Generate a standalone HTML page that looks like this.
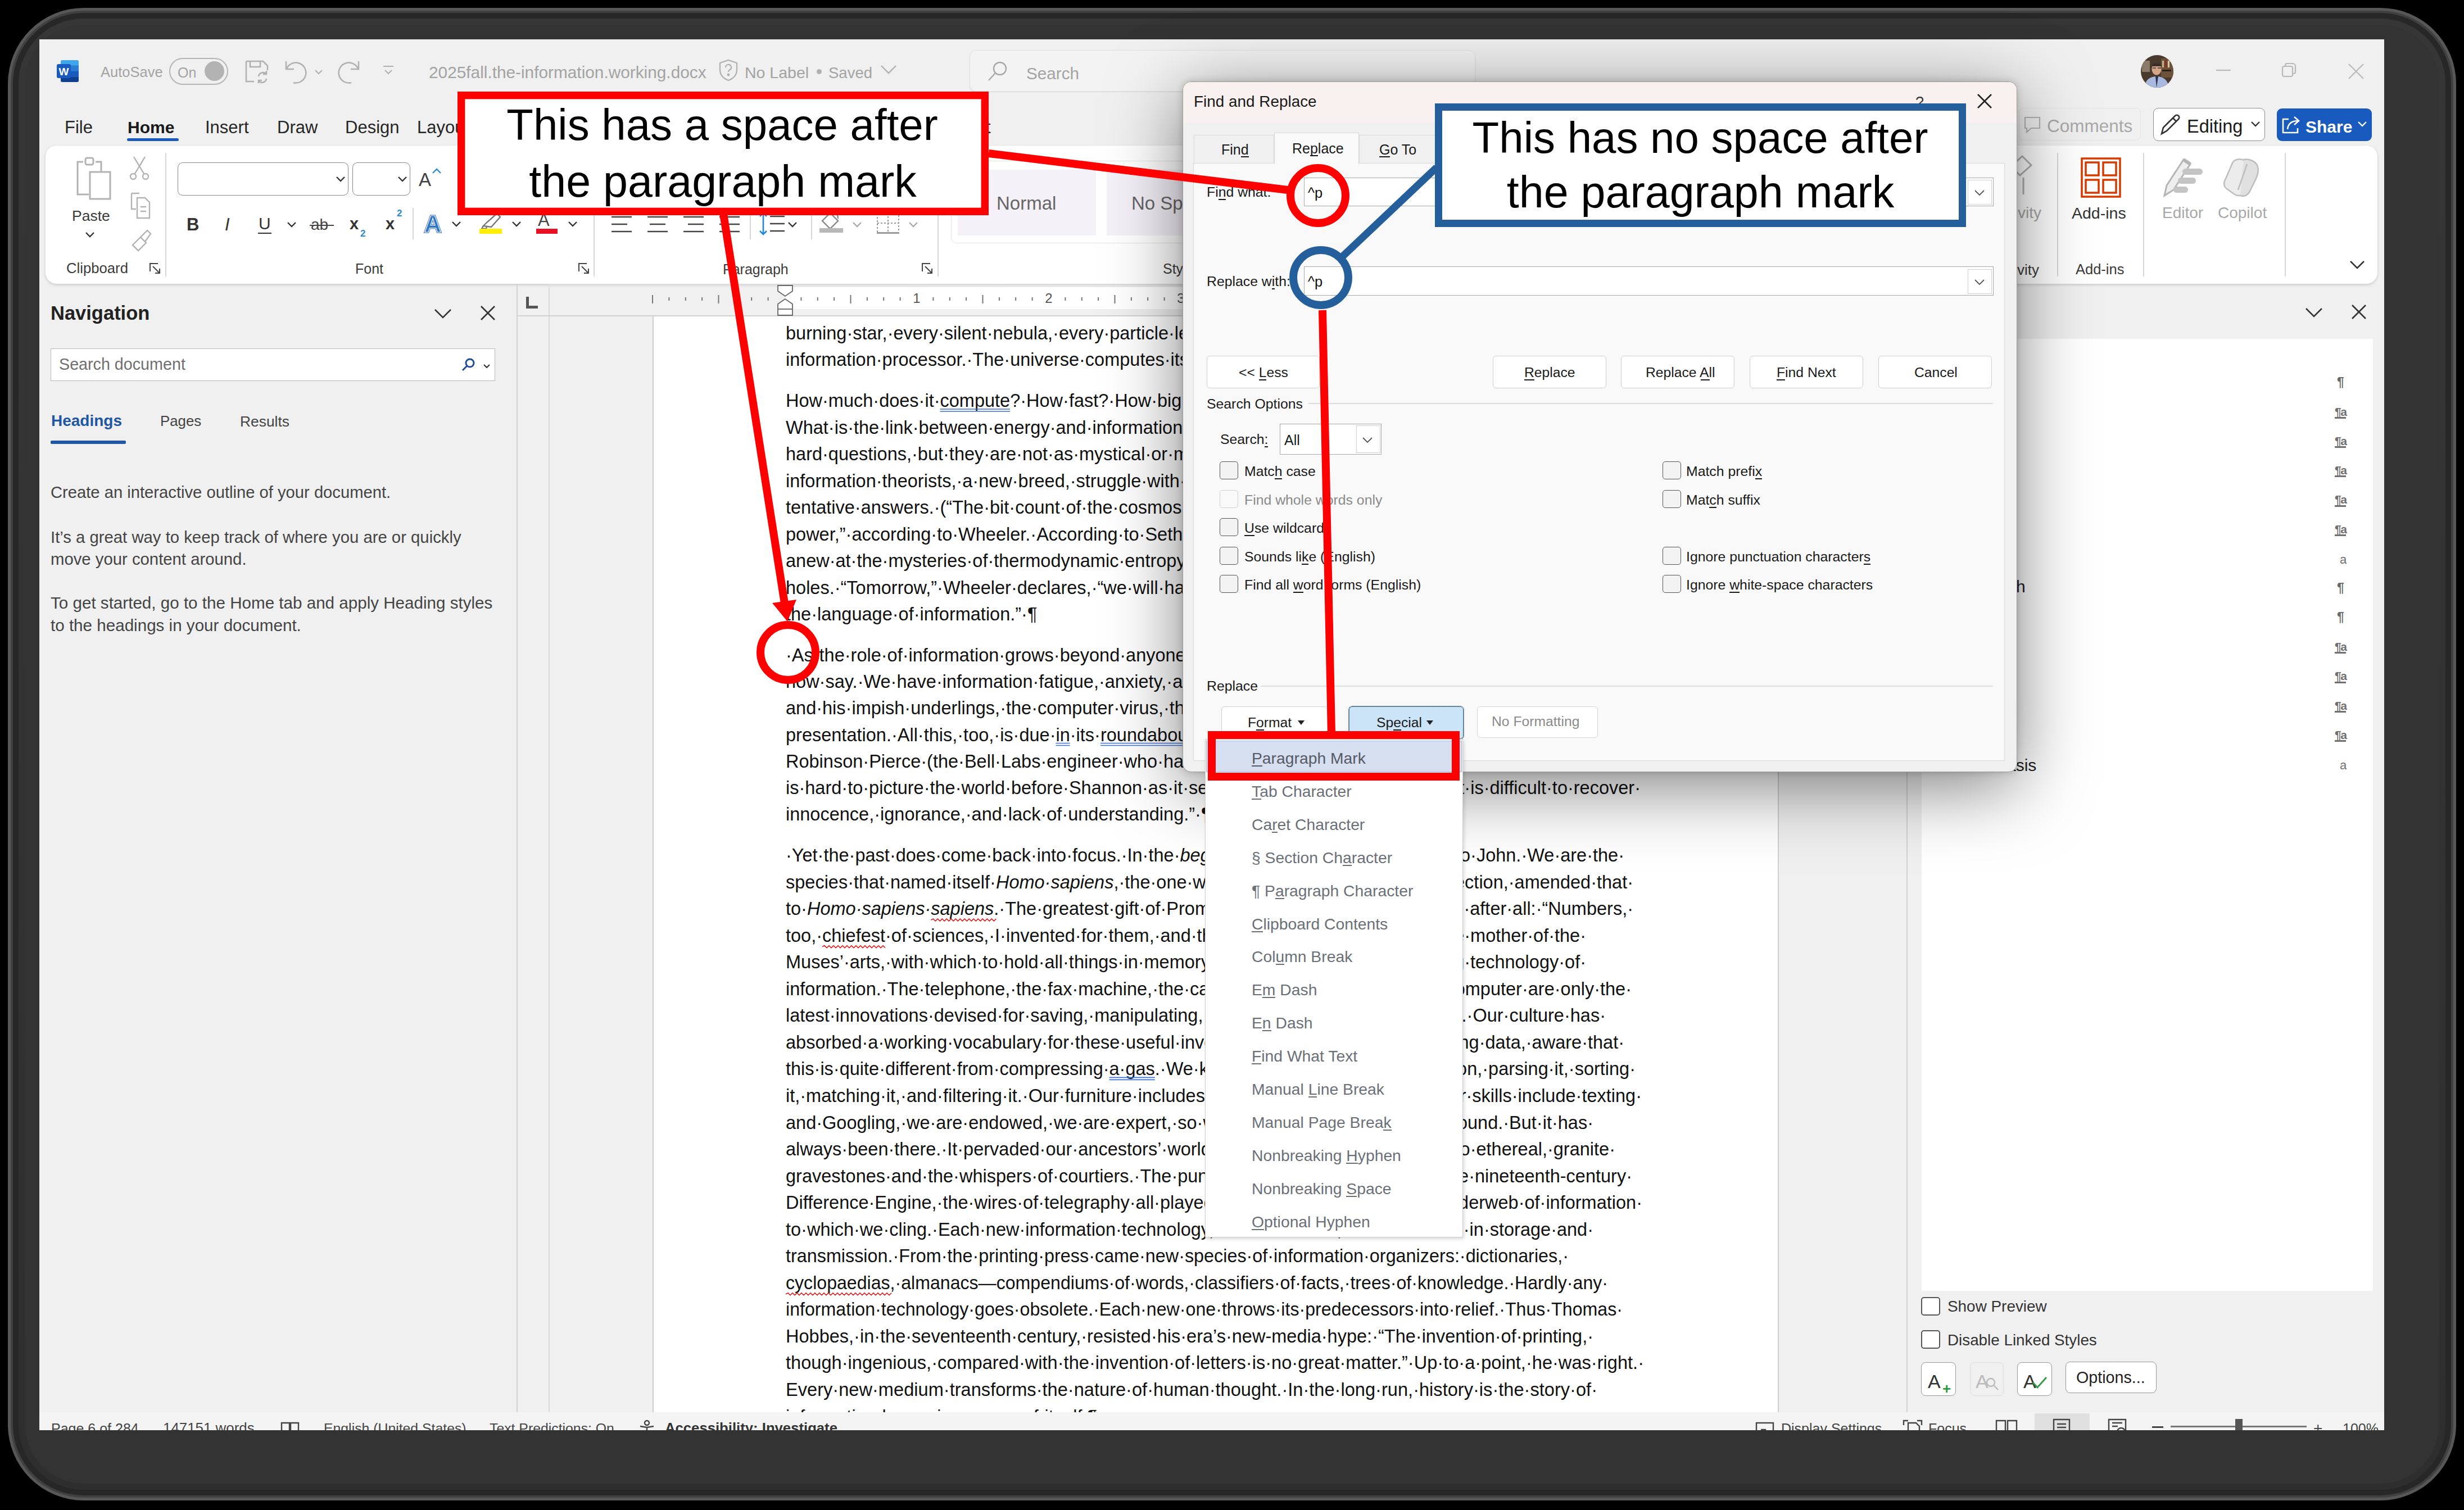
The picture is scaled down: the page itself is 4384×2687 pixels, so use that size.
<!DOCTYPE html>
<html><head><meta charset="utf-8">
<style>
*{margin:0;padding:0;box-sizing:border-box}
html,body{width:4384px;height:2687px;overflow:hidden;background:#000;font-family:"Liberation Sans",sans-serif}
.a{position:absolute}
.t{position:absolute;white-space:pre;line-height:1}
svg{position:absolute;overflow:visible}
</style></head><body>

<div class="a" style="left:14px;top:14px;width:4356px;height:2656px;border-radius:135px;background:#575757"></div>
<div class="a" style="left:19px;top:19px;width:4346px;height:2646px;border-radius:130px;background:#404040"></div>
<div class="a" style="left:23px;top:23px;width:4338px;height:2638px;border-radius:126px;background:#272727"></div>
<div class="a" style="left:33px;top:33px;width:4318px;height:2618px;border-radius:116px;background:linear-gradient(#363636,#2e2e2e)"></div>
<div class="a" style="left:44px;top:44px;width:4296px;height:2596px;border-radius:105px;background:#333"></div>
<div class="a" style="left:70px;top:70px;width:4172px;height:2475px;background:#f0f0f0;overflow:hidden"></div>
<svg style="left:100px;top:106px" width="42" height="42" viewBox="0 0 42 42">
<rect x="8" y="1" width="32" height="39" rx="3" fill="#41a5ee"/>
<rect x="8" y="10.5" width="32" height="10" fill="#2b7cd3"/>
<rect x="8" y="20.5" width="32" height="10" fill="#185abd"/>
<path d="M8 30.5h32v6.5a3 3 0 0 1-3 3H11a3 3 0 0 1-3-3z" fill="#103f91"/>
<rect x="1" y="8" width="25" height="25" rx="3" fill="#185abd"/>
<text x="13.5" y="27.5" font-size="19" font-weight="bold" fill="#fff" text-anchor="middle" font-family="Liberation Sans">W</text>
</svg>
<div class="t" style="left:179.0px;top:116.4px;font-size:25.5px;color:#a3a3a3;">AutoSave</div>
<div class="a" style="left:301px;top:103px;width:105px;height:48px;border:2px solid #b5b5b5;border-radius:24px"></div>
<div class="t" style="left:316.0px;top:116.8px;font-size:25px;color:#a3a3a3;">On</div>
<div class="a" style="left:364px;top:109px;width:35px;height:35px;border-radius:50%;background:#b3b3b3"></div>
<svg style="left:435px;top:106px" width="44" height="44" viewBox="0 0 44 44" fill="none" stroke="#b0b0b0" stroke-width="2.5">
<path d="M3 3h30l8 8v8M3 3v36h14M10 3v10h18V3"/><path d="M25 30a8 8 0 0 1 14-4M39 34a8 8 0 0 1-14 4M39 20v6h-6M25 42v-5h6"/></svg>
<svg style="left:505px;top:105px" width="75" height="44" viewBox="0 0 75 44" fill="none" stroke="#b0b0b0" stroke-width="2.5">
<path d="M4 4v14h14M5 17a18 18 0 1 1 12 25"/><path d="M56 20l6 6 6-6" stroke-width="2"/></svg>
<svg style="left:598px;top:105px" width="44" height="44" viewBox="0 0 44 44" fill="none" stroke="#b0b0b0" stroke-width="2.5">
<path d="M40 4v14H26M39 17a18 18 0 1 0-12 25"/></svg>
<svg style="left:677px;top:112px" width="28" height="28" viewBox="0 0 28 28" fill="none" stroke="#b0b0b0" stroke-width="2.2">
<path d="M5 6h18M8 13l6 6 6-6"/></svg>
<div class="t" style="left:763.0px;top:113.8px;font-size:29.8px;color:#a3a3a3;">2025fall.the-information.working.docx</div>
<svg style="left:1278px;top:105px" width="36" height="40" viewBox="0 0 36 40" fill="none" stroke="#b0b0b0" stroke-width="2.2">
<path d="M18 2l15 5v12c0 10-7 16-15 19C10 35 3 29 3 19V7z"/><path d="M13 15a5 5 0 1 1 7 4.5c-1.5.8-2 1.8-2 3.5"/><circle cx="18" cy="28" r="1.3" fill="#b0b0b0"/></svg>
<div class="t" style="left:1325.0px;top:114.9px;font-size:28.5px;color:#a3a3a3;">No Label</div>
<div class="a" style="left:1453px;top:123px;width:9px;height:9px;border-radius:50%;background:#b0b0b0"></div>
<div class="t" style="left:1474.0px;top:115.7px;font-size:27.5px;color:#a3a3a3;">Saved</div>
<svg style="left:1565px;top:112px" width="32" height="24" viewBox="0 0 32 24" fill="none" stroke="#b0b0b0" stroke-width="2.4">
<path d="M3 5l13 13 13-13"/></svg>
<div class="a" style="left:1725px;top:89px;width:900px;height:74px;border-radius:12px;background:#f3f3f3;border:1.5px solid #e1e1e1;box-shadow:0 1px 2px rgba(0,0,0,0.08)"></div>
<svg style="left:1755px;top:107px" width="40" height="40" viewBox="0 0 40 40" fill="none" stroke="#a8a8a8" stroke-width="2.4">
<circle cx="24" cy="15" r="11"/><path d="M16 23L4 36"/></svg>
<div class="t" style="left:1826.0px;top:115.9px;font-size:29.7px;color:#a3a3a3;">Search</div>
<svg style="left:3809px;top:98px" width="58" height="58" viewBox="0 0 58 58">
<defs><clipPath id="pc"><circle cx="29" cy="29" r="29"/></clipPath></defs>
<g clip-path="url(#pc)"><rect width="58" height="58" fill="#4a3a2e"/>
<rect x="36" y="6" width="22" height="34" fill="#6b5238"/><rect x="38" y="10" width="3" height="12" fill="#c9b48a"/><rect x="43" y="8" width="3" height="14" fill="#8c2f2a"/><rect x="48" y="10" width="3" height="12" fill="#d8c8a0"/><rect x="38" y="26" width="16" height="3" fill="#2a2018"/>
<rect x="2" y="10" width="14" height="20" fill="#8a7a68"/>
<ellipse cx="28" cy="25" rx="8.5" ry="10.5" fill="#d6a488"/>
<path d="M19 20c1-7 17-8 18 0" fill="#3a2e2a"/><path d="M21 23h6M30 23h6" stroke="#333" stroke-width="1.5"/>
<path d="M6 58c2-14 10-20 22-20s20 6 22 20z" fill="#a8b8df"/>
<path d="M26 38l2 20 3-20z" fill="#2b3550"/></g></svg>
<svg style="left:3930px;top:100px" width="290" height="54" viewBox="0 0 290 54" fill="none" stroke="#b9b9b9" stroke-width="2.2">
<path d="M13 25h26"/><rect x="131" y="18" width="18" height="18" rx="3"/><path d="M136 18v-2a3 3 0 0 1 3-3h10a5 5 0 0 1 5 5v10a3 3 0 0 1-3 3h-2"/>
<path d="M249 14l26 26M275 14l-26 26"/></svg>
<div class="t" style="left:115.0px;top:210.8px;font-size:31px;color:#262626;">File</div>
<div class="t" style="left:227.0px;top:211.6px;font-size:30px;color:#1a1a1a;font-weight:bold;">Home</div>
<div class="a" style="left:226px;top:246px;width:92px;height:5px;background:#185abd;border-radius:3px"></div>
<div class="t" style="left:365.0px;top:210.8px;font-size:31px;color:#262626;">Insert</div>
<div class="t" style="left:493.0px;top:210.8px;font-size:31px;color:#262626;">Draw</div>
<div class="t" style="left:614.0px;top:210.8px;font-size:31px;color:#262626;">Design</div>
<div class="t" style="left:742.0px;top:210.8px;font-size:31px;color:#262626;">Layout</div>
<div class="t" style="left:1754.0px;top:210.8px;font-size:31px;color:#262626;">t</div>
<div class="a" style="left:3592px;top:192px;width:217px;height:58px;border:1.5px solid #e3e3e3;border-radius:8px"></div>
<svg style="left:3600px;top:206px" width="32" height="32" viewBox="0 0 32 32" fill="none" stroke="#b3b3b3" stroke-width="2.2">
<path d="M3 3h26v19H14l-8 7v-7H3z"/></svg>
<div class="t" style="left:3642.0px;top:209.3px;font-size:31.5px;color:#a8a8a8;">Comments</div>
<div class="a" style="left:3831px;top:192px;width:199px;height:59px;background:#fff;border:1.5px solid #8f8f8f;border-radius:9px"></div>
<svg style="left:3841px;top:201px" width="40" height="42" viewBox="0 0 40 42" fill="none" stroke="#333" stroke-width="2.6">
<path d="M5 37l3-11L29 5a4 4 0 0 1 6 6L14 32z"/><path d="M25 9l6 6"/></svg>
<div class="t" style="left:3891.0px;top:208.5px;font-size:32.5px;color:#1a1a1a;">Editing</div>
<svg style="left:4003px;top:214px" width="20" height="14" viewBox="0 0 20 14" fill="none" stroke="#333" stroke-width="2.4"><path d="M3 3l7 7 7-7"/></svg>
<div class="a" style="left:4051px;top:193px;width:169px;height:58px;background:#185abd;border-radius:9px"></div>
<svg style="left:4058px;top:204px" width="38" height="36" viewBox="0 0 38 36" fill="none" stroke="#fff" stroke-width="2.6">
<path d="M14 8H4v24h26v-8"/><path d="M12 26c1-10 8-15 19-15M24 4l8 7-8 7"/></svg>
<div class="t" style="left:4102.0px;top:210.6px;font-size:30px;color:#fff;font-weight:bold;">Share</div>
<svg style="left:4193px;top:214px" width="20" height="14" viewBox="0 0 20 14" fill="none" stroke="#fff" stroke-width="2.4"><path d="M3 3l7 7 7-7"/></svg>
<div class="a" style="left:81px;top:259px;width:4149px;height:246px;background:#fff;border-radius:20px;box-shadow:0 2px 5px rgba(0,0,0,0.16)"></div>
<svg style="left:126px;top:276px" width="80" height="82" viewBox="0 0 80 82" fill="none" stroke="#b3b3b3" stroke-width="3">
<path d="M22 12h-10v58h20"/><path d="M44 12h10v18"/><rect x="26" y="5" width="14" height="12" rx="3"/><rect x="34" y="30" width="36" height="48" fill="#fff"/></svg>
<div class="t" style="left:128.0px;top:370.6px;font-size:26.5px;color:#3b3b3b;">Paste</div>
<svg style="left:150px;top:411px" width="20" height="14" viewBox="0 0 20 14" fill="none" stroke="#333" stroke-width="2.4"><path d="M3 3l7 7 7-7"/></svg>
<svg style="left:228px;top:276px" width="40" height="180" viewBox="0 0 40 180" fill="none" stroke="#b3b3b3" stroke-width="2.4">
<path d="M10 3l18 30M30 3L12 33"/><circle cx="9" cy="38" r="5"/><circle cx="31" cy="38" r="5"/>
<path d="M6 68h14l0 0M6 68v28h8"/><path d="M16 76h14l8 8v28H16z"/><path d="M22 92h10M22 100h10"/>
<path d="M8 160l14-14 10 10-14 14zM22 146l12-12 6 6-10 14"/><path d="M8 160c4 4 8 8 10 10"/></svg>
<div class="t" style="left:118.0px;top:465.2px;font-size:25.7px;color:#3b3b3b;">Clipboard</div>
<svg style="left:265px;top:467px" width="22" height="22" viewBox="0 0 22 22" fill="none" stroke="#444" stroke-width="2">
<path d="M2 16V2h14"/><path d="M7 7l12 12M19 11v8h-8"/></svg>
<div class="a" style="left:294px;top:272px;width:2px;height:220px;background:#d6d6d6"></div>
<div class="a" style="left:316px;top:289px;width:304px;height:59px;border:1.5px solid #8a8a8a;border-radius:9px;background:#fff"></div>
<div class="a" style="left:627px;top:289px;width:103px;height:59px;border:1.5px solid #8a8a8a;border-radius:9px;background:#fff"></div>
<svg style="left:595.0px;top:311.0px" width="22" height="14.0" viewBox="-3 -3 22 14.0" fill="none" stroke="#333" stroke-width="2.4"><path d="M1 1l7.0 7.0 7.0 -7.0"/></svg>
<svg style="left:705.0px;top:311.0px" width="22" height="14.0" viewBox="-3 -3 22 14.0" fill="none" stroke="#333" stroke-width="2.4"><path d="M1 1l7.0 7.0 7.0 -7.0"/></svg>
<div class="t" style="left:745.0px;top:303.1px;font-size:33px;color:#424242;">A</div>
<svg style="left:768px;top:298px" width="18" height="12" viewBox="0 0 18 12" fill="none" stroke="#2b88d8" stroke-width="2.4"><path d="M2 10l7-7 7 7"/></svg>
<div class="t" style="left:332.0px;top:383.8px;font-size:31px;color:#333;font-weight:bold;">B</div>
<div class="t" style="left:400.0px;top:383.8px;font-size:31px;color:#333;font-style:italic;font-family:"Liberation Serif"">I</div>
<div class="t" style="left:460.0px;top:382.6px;font-size:30px;color:#333;">U</div>
<div class="a" style="left:459px;top:414px;width:24px;height:2px;background:#333"></div>
<svg style="left:508.0px;top:392.0px" width="22" height="14.0" viewBox="-3 -3 22 14.0" fill="none" stroke="#333" stroke-width="2.4"><path d="M1 1l7.0 7.0 7.0 -7.0"/></svg>
<div class="t" style="left:553.0px;top:386.3px;font-size:28px;color:#444;">ab</div>
<div class="a" style="left:551px;top:400px;width:43px;height:2px;background:#444"></div>
<div class="t" style="left:622.0px;top:383.5px;font-size:29px;color:#333;font-weight:bold;">x</div>
<div class="t" style="left:641.0px;top:406.6px;font-size:17px;color:#2b88d8;font-weight:bold;">2</div>
<div class="t" style="left:686.0px;top:383.5px;font-size:29px;color:#333;font-weight:bold;">x</div>
<div class="t" style="left:706.0px;top:370.6px;font-size:17px;color:#2b88d8;font-weight:bold;">2</div>
<div class="a" style="left:734px;top:370px;width:2px;height:56px;background:#d6d6d6"></div>
<svg style="left:745px;top:370px" width="50" height="50" viewBox="0 0 50 50"><text x="25" y="43" font-size="42" font-weight="bold" text-anchor="middle" font-family="Liberation Sans" fill="#2b7cd3" stroke="#1b5fb8" stroke-width="3">A</text><text x="25" y="43" font-size="42" font-weight="bold" text-anchor="middle" font-family="Liberation Sans" fill="none" stroke="#fff" stroke-width="1.2">A</text></svg>
<svg style="left:801.0px;top:391.0px" width="22" height="14.0" viewBox="-3 -3 22 14.0" fill="none" stroke="#333" stroke-width="2.4"><path d="M1 1l7.0 7.0 7.0 -7.0"/></svg>
<svg style="left:852px;top:374px" width="44" height="44" viewBox="0 0 44 44" fill="none" stroke="#777" stroke-width="2.4">
<path d="M8 28l6-6 18-16 6 6-16 18z"/><path d="M8 28l-3 5h8l1-4"/></svg>
<div class="a" style="left:853px;top:407px;width:40px;height:9px;background:#ffee00"></div>
<svg style="left:908.0px;top:391.0px" width="22" height="14.0" viewBox="-3 -3 22 14.0" fill="none" stroke="#333" stroke-width="2.4"><path d="M1 1l7.0 7.0 7.0 -7.0"/></svg>
<div class="t" style="left:957.0px;top:375.8px;font-size:31px;color:#444;">A</div>
<div class="a" style="left:954px;top:407px;width:38px;height:9px;background:#e81123"></div>
<svg style="left:1008.0px;top:391.0px" width="22" height="14.0" viewBox="-3 -3 22 14.0" fill="none" stroke="#333" stroke-width="2.4"><path d="M1 1l7.0 7.0 7.0 -7.0"/></svg>
<div class="t" style="left:632.0px;top:465.8px;font-size:25px;color:#3b3b3b;">Font</div>
<svg style="left:1028px;top:467px" width="22" height="22" viewBox="0 0 22 22" fill="none" stroke="#444" stroke-width="2">
<path d="M2 16V2h14"/><path d="M7 7l12 12M19 11v8h-8"/></svg>
<div class="a" style="left:1056px;top:272px;width:2px;height:220px;background:#d6d6d6"></div>
<svg style="left:1085px;top:380px" width="240" height="38" viewBox="0 0 240 38" fill="none" stroke="#444" stroke-width="2.6">
<path d="M3 6h36M3 19h28M3 32h36"/><path d="M67 6h36M71 19h28M67 32h36"/><path d="M131 6h36M139 19h28M131 32h36"/><path d="M195 6h36M195 19h36M195 32h36"/></svg>
<div class="a" style="left:1334px;top:370px;width:2px;height:56px;background:#d6d6d6"></div>
<svg style="left:1350px;top:375px" width="50" height="46" viewBox="0 0 50 46" fill="none" stroke-width="2.6">
<path d="M8 4v38M2 10l6-6 6 6M2 36l6 6 6-6" stroke="#1e88e5"/><path d="M20 10h26M20 23h26M20 36h26" stroke="#444"/></svg>
<svg style="left:1399.0px;top:392.0px" width="22" height="14.0" viewBox="-3 -3 22 14.0" fill="none" stroke="#333" stroke-width="2.4"><path d="M1 1l7.0 7.0 7.0 -7.0"/></svg>
<div class="a" style="left:1443px;top:370px;width:2px;height:56px;background:#d6d6d6"></div>
<svg style="left:1455px;top:373px" width="50" height="46" viewBox="0 0 50 46" fill="none" stroke="#888" stroke-width="2.4">
<path d="M8 20l14-14 14 14-14 14z"/><path d="M22 6c6-4 14 0 14 10"/></svg>
<div class="a" style="left:1458px;top:406px;width:42px;height:8px;background:#b8b8b8"></div>
<svg style="left:1514.0px;top:392.0px" width="22" height="14.0" viewBox="-3 -3 22 14.0" fill="none" stroke="#aaa" stroke-width="2.4"><path d="M1 1l7.0 7.0 7.0 -7.0"/></svg>
<svg style="left:1558px;top:376px" width="46" height="42" viewBox="0 0 46 42" fill="none" stroke="#9a9a9a" stroke-width="2" stroke-dasharray="3 3">
<path d="M3 3h38v36H3zM22 3v36M3 21h38"/></svg>
<div class="a" style="left:1560px;top:413px;width:40px;height:3px;background:#9a9a9a"></div>
<svg style="left:1614.0px;top:392.0px" width="22" height="14.0" viewBox="-3 -3 22 14.0" fill="none" stroke="#aaa" stroke-width="2.4"><path d="M1 1l7.0 7.0 7.0 -7.0"/></svg>
<div class="t" style="left:1286.0px;top:466.8px;font-size:25px;color:#3b3b3b;">Paragraph</div>
<svg style="left:1639px;top:467px" width="22" height="22" viewBox="0 0 22 22" fill="none" stroke="#444" stroke-width="2">
<path d="M2 16V2h14"/><path d="M7 7l12 12M19 11v8h-8"/></svg>
<div class="a" style="left:1668px;top:272px;width:2px;height:220px;background:#d6d6d6"></div>
<div class="a" style="left:1692px;top:286px;width:700px;height:147px;border:1.5px solid #e3e3e3;border-radius:10px"></div>
<div class="a" style="left:1704px;top:302px;width:246px;height:117px;background:#f4f1f8"></div>
<div class="a" style="left:1969px;top:302px;width:246px;height:117px;background:#f4f1f8"></div>
<div class="t" style="left:1773.0px;top:345.1px;font-size:33px;color:#666;">Normal</div>
<div class="t" style="left:2013.0px;top:345.1px;font-size:33px;color:#666;">No Spacing</div>
<div class="t" style="left:2069.0px;top:465.8px;font-size:25px;color:#3b3b3b;">Styles</div>
<div class="t" style="right:752.0px;top:365.3px;font-size:28px;color:#a8a8a8;">Sensitivity</div>
<div class="t" style="right:756.0px;top:467.0px;font-size:26px;color:#3b3b3b;">Sensitivity</div>
<svg style="left:3588px;top:276px" width="40" height="80" viewBox="0 0 40 80" fill="none" stroke="#b3b3b3" stroke-width="3"><path d="M-10 20L10 2l16 16-20 18z"/><path d="M-2 40v30M12 40v30"/></svg>
<div class="a" style="left:3660px;top:272px;width:2px;height:220px;background:#d6d6d6"></div>
<svg style="left:3702px;top:280px" width="72" height="72" viewBox="0 0 72 72" fill="none" stroke="#d83b01" stroke-width="3.5">
<rect x="2" y="2" width="68" height="68"/><rect x="9" y="9" width="23" height="23"/><rect x="40" y="9" width="23" height="23"/><rect x="9" y="40" width="23" height="23"/><rect x="40" y="40" width="23" height="23"/></svg>
<div class="t" style="left:3686.0px;top:364.9px;font-size:28.5px;color:#333;">Add-ins</div>
<div class="t" style="left:3693.0px;top:467.4px;font-size:25.5px;color:#3b3b3b;">Add-ins</div>
<div class="a" style="left:3813px;top:272px;width:2px;height:220px;background:#d6d6d6"></div>
<svg style="left:3845px;top:278px" width="80" height="75" viewBox="0 0 80 75" stroke="#b5b5b5" stroke-width="3">
<path d="M6 70l4-18L40 6l12 8-30 46z" fill="#eeeeee"/><path d="M40 6l12 8" stroke-width="6"/>
<rect x="38" y="22" width="36" height="11" rx="5.5" fill="#c4c4c4" stroke="none"/><rect x="30" y="38" width="32" height="11" rx="5.5" fill="#c4c4c4" stroke="none"/><rect x="22" y="54" width="26" height="11" rx="5.5" fill="#c4c4c4" stroke="none"/></svg>
<div class="t" style="left:3847.0px;top:365.3px;font-size:28px;color:#a8a8a8;">Editor</div>
<svg style="left:3952px;top:278px" width="80" height="75" viewBox="0 0 80 75" stroke="#bdbdbd" stroke-width="2.5">
<path d="M20 12c4-8 16-8 22-4l14 6c8 4 6 14 2 20L44 62c-4 8-14 10-20 6L10 58c-6-4-6-12-2-18z" fill="#ececec"/>
<path d="M40 6c8-2 20 2 24 10s0 20-4 28L50 64c-4 6-10 8-16 6" fill="#e0e0e0"/><path d="M46 14L30 60" fill="none"/></svg>
<div class="t" style="left:3946.0px;top:365.3px;font-size:28px;color:#a8a8a8;">Copilot</div>
<div class="a" style="left:4065px;top:272px;width:2px;height:220px;background:#d6d6d6"></div>
<svg style="left:4178.0px;top:460.5px" width="32" height="19.0" viewBox="-3 -3 32 19.0" fill="none" stroke="#333" stroke-width="2.6"><path d="M1 1l12.0 12.0 12.0 -12.0"/></svg>
<div class="t" style="left:90.0px;top:539.8px;font-size:34.5px;color:#222;font-weight:bold;">Navigation</div>
<svg style="left:770.0px;top:546.5px" width="36" height="21.0" viewBox="-3 -3 36 21.0" fill="none" stroke="#333" stroke-width="2.6"><path d="M1 1l14.0 14.0 14.0 -14.0"/></svg>
<svg style="left:853px;top:542px" width="30" height="30" viewBox="0 0 30 30" fill="none" stroke="#333" stroke-width="2.6"><path d="M3 3l24 24M27 3L3 27"/></svg>
<div class="a" style="left:90px;top:620px;width:791px;height:58px;background:#fff;border:1.5px solid #b9b9b9"></div>
<div class="t" style="left:105.0px;top:633.7px;font-size:28.7px;color:#6f6f6f;">Search document</div>
<svg style="left:820px;top:636px" width="26" height="26" viewBox="0 0 26 26" fill="none" stroke="#1f4e9a" stroke-width="3"><circle cx="16" cy="10" r="7"/><path d="M11 15L3 23"/></svg>
<svg style="left:857.0px;top:645.0px" width="18" height="12.0" viewBox="-3 -3 18 12.0" fill="none" stroke="#333" stroke-width="2.2"><path d="M1 1l5.0 5.0 5.0 -5.0"/></svg>
<div class="t" style="left:91.0px;top:735.3px;font-size:28px;color:#2156a5;font-weight:bold;">Headings</div>
<div class="a" style="left:90px;top:784px;width:134px;height:6px;background:#2156a5;border-radius:2px"></div>
<div class="t" style="left:285.0px;top:737.2px;font-size:25.8px;color:#444;">Pages</div>
<div class="t" style="left:427.0px;top:736.7px;font-size:26.4px;color:#444;">Results</div>
<div class="t" style="left:90.0px;top:862.3px;font-size:29.2px;color:#444;">Create an interactive outline of your document.</div>
<div class="t" style="left:90.0px;top:941.2px;font-size:29.3px;color:#444;">It’s a great way to keep track of where you are or quickly</div>
<div class="t" style="left:90.0px;top:980.2px;font-size:29.3px;color:#444;">move your content around.</div>
<div class="t" style="left:90.0px;top:1057.9px;font-size:29.6px;color:#444;">To get started, go to the Home tab and apply Heading styles</div>
<div class="t" style="left:90.0px;top:1097.9px;font-size:29.6px;color:#444;">to the headings in your document.</div>
<div class="a" style="left:919px;top:505px;width:2px;height:2008px;background:#d2d2d2"></div>
<div class="a" style="left:976px;top:505px;width:2px;height:2008px;background:#d9d9d9"></div>
<div class="a" style="left:920px;top:561px;width:2472px;height:2px;background:#d2d2d2"></div>
<svg style="left:932px;top:524px" width="30" height="30" viewBox="0 0 30 30" fill="#555"><path d="M4 4h5v16h16v5H4z"/></svg>
<div class="a" style="left:977px;top:505px;width:2415px;height:7px;background:linear-gradient(#d8d8d8,#f0f0f0)"></div>
<div class="a" style="left:1397px;top:511px;width:1531px;height:39px;background:#fff"></div>
<svg style="left:0;top:0" width="4384" height="600"><rect x="1160.0" y="525" width="2" height="15" fill="#777"/><rect x="1189.4" y="529" width="2" height="6" fill="#777"/><rect x="1218.8" y="529" width="2" height="6" fill="#777"/><rect x="1248.1" y="529" width="2" height="6" fill="#777"/><rect x="1277.5" y="525" width="2" height="15" fill="#777"/><rect x="1306.9" y="529" width="2" height="6" fill="#777"/><rect x="1336.2" y="529" width="2" height="6" fill="#777"/><rect x="1365.6" y="529" width="2" height="6" fill="#777"/><rect x="1424.4" y="529" width="2" height="6" fill="#777"/><rect x="1453.8" y="529" width="2" height="6" fill="#777"/><rect x="1483.1" y="529" width="2" height="6" fill="#777"/><rect x="1512.5" y="525" width="2" height="15" fill="#777"/><rect x="1541.9" y="529" width="2" height="6" fill="#777"/><rect x="1571.2" y="529" width="2" height="6" fill="#777"/><rect x="1600.6" y="529" width="2" height="6" fill="#777"/><text x="1631.0" y="539" font-size="24" text-anchor="middle" fill="#555" font-family="Liberation Sans">1</text><rect x="1659.4" y="529" width="2" height="6" fill="#777"/><rect x="1688.8" y="529" width="2" height="6" fill="#777"/><rect x="1718.1" y="529" width="2" height="6" fill="#777"/><rect x="1747.5" y="525" width="2" height="15" fill="#777"/><rect x="1776.9" y="529" width="2" height="6" fill="#777"/><rect x="1806.2" y="529" width="2" height="6" fill="#777"/><rect x="1835.6" y="529" width="2" height="6" fill="#777"/><text x="1866.0" y="539" font-size="24" text-anchor="middle" fill="#555" font-family="Liberation Sans">2</text><rect x="1894.4" y="529" width="2" height="6" fill="#777"/><rect x="1923.8" y="529" width="2" height="6" fill="#777"/><rect x="1953.1" y="529" width="2" height="6" fill="#777"/><rect x="1982.5" y="525" width="2" height="15" fill="#777"/><rect x="2011.9" y="529" width="2" height="6" fill="#777"/><rect x="2041.2" y="529" width="2" height="6" fill="#777"/><rect x="2070.6" y="529" width="2" height="6" fill="#777"/><text x="2101.0" y="539" font-size="24" text-anchor="middle" fill="#555" font-family="Liberation Sans">3</text><rect x="2129.4" y="529" width="2" height="6" fill="#777"/><rect x="2158.8" y="529" width="2" height="6" fill="#777"/><rect x="2188.1" y="529" width="2" height="6" fill="#777"/><rect x="2217.5" y="525" width="2" height="15" fill="#777"/><rect x="2246.9" y="529" width="2" height="6" fill="#777"/><rect x="2276.2" y="529" width="2" height="6" fill="#777"/><rect x="2305.6" y="529" width="2" height="6" fill="#777"/><text x="2336.0" y="539" font-size="24" text-anchor="middle" fill="#555" font-family="Liberation Sans">4</text><rect x="2364.4" y="529" width="2" height="6" fill="#777"/><rect x="2393.8" y="529" width="2" height="6" fill="#777"/><rect x="2423.1" y="529" width="2" height="6" fill="#777"/><rect x="2452.5" y="525" width="2" height="15" fill="#777"/><rect x="2481.9" y="529" width="2" height="6" fill="#777"/><rect x="2511.2" y="529" width="2" height="6" fill="#777"/><rect x="2540.6" y="529" width="2" height="6" fill="#777"/><text x="2571.0" y="539" font-size="24" text-anchor="middle" fill="#555" font-family="Liberation Sans">5</text><rect x="2599.4" y="529" width="2" height="6" fill="#777"/><rect x="2628.8" y="529" width="2" height="6" fill="#777"/><rect x="2658.1" y="529" width="2" height="6" fill="#777"/><rect x="2687.5" y="525" width="2" height="15" fill="#777"/><rect x="2716.9" y="529" width="2" height="6" fill="#777"/><rect x="2746.2" y="529" width="2" height="6" fill="#777"/><rect x="2775.6" y="529" width="2" height="6" fill="#777"/><text x="2806.0" y="539" font-size="24" text-anchor="middle" fill="#555" font-family="Liberation Sans">6</text><rect x="2834.4" y="529" width="2" height="6" fill="#777"/><rect x="2863.8" y="529" width="2" height="6" fill="#777"/><rect x="2893.1" y="529" width="2" height="6" fill="#777"/><rect x="2922.5" y="525" width="2" height="15" fill="#777"/><rect x="2951.9" y="529" width="2" height="6" fill="#777"/><rect x="2981.2" y="529" width="2" height="6" fill="#777"/><rect x="3010.6" y="529" width="2" height="6" fill="#777"/><text x="3041.0" y="539" font-size="24" text-anchor="middle" fill="#555" font-family="Liberation Sans">7</text><rect x="3069.4" y="529" width="2" height="6" fill="#777"/><rect x="3098.8" y="529" width="2" height="6" fill="#777"/><rect x="3128.1" y="529" width="2" height="6" fill="#777"/>
<path d="M1384 508h26v10l-13 9-13-9z" fill="#fff" stroke="#666" stroke-width="1.8"/>
<path d="M1384 561v-20l13-9 13 9v20z" fill="#fff" stroke="#666" stroke-width="1.8"/><path d="M1384 550h26" stroke="#666" stroke-width="1.8"/>
</svg>
<div class="a" style="left:1163px;top:563px;width:2000px;height:1950px;background:#fff"></div>
<div class="a" style="left:1161px;top:563px;width:2px;height:1950px;background:#cfcfcf"></div>
<div class="a" style="left:3163px;top:563px;width:2px;height:1950px;background:#cfcfcf"></div>
<div class="a" style="left:3392px;top:505px;width:2px;height:2008px;background:#d2d2d2"></div>
<svg style="left:4099.0px;top:544.5px" width="36" height="21.0" viewBox="-3 -3 36 21.0" fill="none" stroke="#333" stroke-width="2.6"><path d="M1 1l14.0 14.0 14.0 -14.0"/></svg>
<svg style="left:4182px;top:540px" width="30" height="30" viewBox="0 0 30 30" fill="none" stroke="#333" stroke-width="2.6"><path d="M3 3l24 24M27 3L3 27"/></svg>
<div class="a" style="left:3419px;top:603px;width:803px;height:1694px;background:#fff"></div>
<div class="t" style="left:4158.0px;top:668.5px;font-size:23px;color:#6a6a6a;font-weight:bold;">¶</div>
<div class="t" style="left:4154.0px;top:721.5px;font-size:21px;color:#707070;font-weight:bold;letter-spacing:-1.5px">¶a</div>
<div class="a" style="left:4154px;top:742px;width:20px;height:3px;background:#707070"></div>
<div class="t" style="left:4154.0px;top:773.8px;font-size:21px;color:#707070;font-weight:bold;letter-spacing:-1.5px">¶a</div>
<div class="a" style="left:4154px;top:794px;width:20px;height:3px;background:#707070"></div>
<div class="t" style="left:4154.0px;top:826.1px;font-size:21px;color:#707070;font-weight:bold;letter-spacing:-1.5px">¶a</div>
<div class="a" style="left:4154px;top:846px;width:20px;height:3px;background:#707070"></div>
<div class="t" style="left:4154.0px;top:878.4px;font-size:21px;color:#707070;font-weight:bold;letter-spacing:-1.5px">¶a</div>
<div class="a" style="left:4154px;top:899px;width:20px;height:3px;background:#707070"></div>
<div class="t" style="left:4154.0px;top:930.7px;font-size:21px;color:#707070;font-weight:bold;letter-spacing:-1.5px">¶a</div>
<div class="a" style="left:4154px;top:951px;width:20px;height:3px;background:#707070"></div>
<div class="t" style="left:4163.0px;top:985.2px;font-size:22px;color:#707070;">a</div>
<div class="t" style="left:4158.0px;top:1034.6px;font-size:23px;color:#6a6a6a;font-weight:bold;">¶</div>
<div class="t" style="left:4158.0px;top:1086.9px;font-size:23px;color:#6a6a6a;font-weight:bold;">¶</div>
<div class="t" style="left:4154.0px;top:1139.9px;font-size:21px;color:#707070;font-weight:bold;letter-spacing:-1.5px">¶a</div>
<div class="a" style="left:4154px;top:1160px;width:20px;height:3px;background:#707070"></div>
<div class="t" style="left:4154.0px;top:1192.2px;font-size:21px;color:#707070;font-weight:bold;letter-spacing:-1.5px">¶a</div>
<div class="a" style="left:4154px;top:1213px;width:20px;height:3px;background:#707070"></div>
<div class="t" style="left:4154.0px;top:1244.5px;font-size:21px;color:#707070;font-weight:bold;letter-spacing:-1.5px">¶a</div>
<div class="a" style="left:4154px;top:1265px;width:20px;height:3px;background:#707070"></div>
<div class="t" style="left:4154.0px;top:1296.8px;font-size:21px;color:#707070;font-weight:bold;letter-spacing:-1.5px">¶a</div>
<div class="a" style="left:4154px;top:1317px;width:20px;height:3px;background:#707070"></div>
<div class="t" style="left:4163.0px;top:1351.3px;font-size:22px;color:#707070;">a</div>
<div class="t" style="left:3587.0px;top:1028.6px;font-size:30px;color:#222;">h</div>
<div class="t" style="left:3570.0px;top:1346.6px;font-size:30px;color:#222;">asis</div>
<div class="a" style="left:3418px;top:2308px;width:34px;height:33px;border:2px solid #555;border-radius:5px;background:#fff"></div>
<div class="t" style="left:3465.0px;top:2311.4px;font-size:27.9px;color:#333;">Show Preview</div>
<div class="a" style="left:3418px;top:2367px;width:34px;height:33px;border:2px solid #555;border-radius:5px;background:#fff"></div>
<div class="t" style="left:3465.0px;top:2370.5px;font-size:27.8px;color:#333;">Disable Linked Styles</div>
<div class="a" style="left:3418px;top:2424px;width:62px;height:60px;border:1.5px solid #999;border-radius:8px;background:#fff"></div>
<div class="t" style="left:3430.0px;top:2441.2px;font-size:34px;color:#333;">A</div>
<div class="t" style="left:3456.0px;top:2458.0px;font-size:26px;color:#2e9a3e;font-weight:bold;">+</div>
<div class="a" style="left:3505px;top:2424px;width:60px;height:60px;border:1.5px solid #dedede;border-radius:8px"></div>
<div class="t" style="left:3515.0px;top:2441.2px;font-size:34px;color:#bbb;">A</div>
<svg style="left:3530px;top:2448px" width="28" height="28" viewBox="0 0 28 28" fill="none" stroke="#bbb" stroke-width="2.4"><circle cx="12" cy="12" r="7"/><path d="M17 17l8 8"/></svg>
<div class="a" style="left:3589px;top:2424px;width:62px;height:60px;border:1.5px solid #999;border-radius:8px;background:#fff"></div>
<div class="t" style="left:3600.0px;top:2441.2px;font-size:34px;color:#333;">A</div>
<svg style="left:3614px;top:2448px" width="30" height="26" viewBox="0 0 30 26" fill="none" stroke="#2e9a3e" stroke-width="2.8"><path d="M3 12l8 9L27 3"/></svg>
<div class="a" style="left:3675px;top:2423px;width:162px;height:56px;border:1.5px solid #999;border-radius:8px;background:#fff"></div>
<div class="t" style="left:3694.0px;top:2436.7px;font-size:28.7px;color:#222;">Options...</div>
<div class="a" style="left:70px;top:2513px;width:4172px;height:32px;background:#f4f4f4"></div>
<div class="a" style="left:0;top:0;width:4242px;height:2545px;overflow:hidden">
<div class="t" style="left:91.0px;top:2529.8px;font-size:25px;color:#444;">Page 6 of 284</div>
<div class="t" style="left:290.0px;top:2529.1px;font-size:25.9px;color:#444;">147151 words</div>
<svg style="left:499px;top:2530px" width="36" height="30" viewBox="0 0 36 30" fill="none" stroke="#444" stroke-width="2.4"><path d="M2 2h14v26H2zM18 2h14v26H18z"/></svg>
<div class="t" style="left:576.0px;top:2530.0px;font-size:24.8px;color:#444;">English (United States)</div>
<div class="t" style="left:871.0px;top:2530.0px;font-size:24.8px;color:#444;">Text Predictions: On</div>
<svg style="left:1136px;top:2526px" width="30" height="30" viewBox="0 0 30 30" fill="none" stroke="#444" stroke-width="2.4"><circle cx="15" cy="6" r="4"/><path d="M3 12l12 2 12-2M15 14v8l-6 8M15 22l6 8"/></svg>
<div class="t" style="left:1183.0px;top:2529.2px;font-size:25.7px;color:#333;font-weight:bold;">Accessibility: Investigate</div>
<svg style="left:3123px;top:2530px" width="36" height="30" viewBox="0 0 36 30" fill="none" stroke="#444" stroke-width="2.4"><rect x="2" y="2" width="30" height="26"/><path d="M10 14h8v8"/></svg>
<div class="t" style="left:3169.0px;top:2529.8px;font-size:25px;color:#444;">Display Settings</div>
<svg style="left:3385px;top:2526px" width="36" height="34" viewBox="0 0 36 34" fill="none" stroke="#444" stroke-width="2.4"><path d="M2 10V2h8M26 2h8v8M10 6h14l6 6v20H10z"/></svg>
<div class="t" style="left:3431.0px;top:2529.8px;font-size:25px;color:#444;">Focus</div>
<svg style="left:3550px;top:2524px" width="40" height="30" viewBox="0 0 40 30" fill="none" stroke="#444" stroke-width="2.4"><path d="M2 4h16v26H2zM22 4h16v26H22z"/></svg>
<div class="a" style="left:3620px;top:2515px;width:98px;height:30px;background:#e0e0e0"></div>
<svg style="left:3650px;top:2524px" width="36" height="30" viewBox="0 0 36 30" fill="none" stroke="#444" stroke-width="2.4"><path d="M4 2h28v28H4zM10 10h16M10 16h16M10 22h16"/></svg>
<svg style="left:3748px;top:2524px" width="40" height="30" viewBox="0 0 40 30" fill="none" stroke="#444" stroke-width="2.4"><path d="M4 2h30v28H4zM10 8h18M10 14h10"/><circle cx="26" cy="24" r="7"/></svg>
<div class="a" style="left:3829px;top:2538px;width:20px;height:3px;background:#444"></div>
<div class="a" style="left:3862px;top:2537px;width:242px;height:3px;background:#777"></div>
<div class="a" style="left:3977px;top:2525px;width:13px;height:20px;background:#555"></div>
<div class="t" style="left:4116.0px;top:2528.3px;font-size:28px;color:#444;">+</div>
<div class="t" style="left:4168.0px;top:2529.8px;font-size:25px;color:#444;">100%</div>
</div>
<div class="a" style="left:0;top:0;width:4384px;height:2513px;overflow:hidden"><svg style="left:0;top:0" width="4384" height="2513" viewBox="0 0 4384 2513"><g font-family="Liberation Sans" font-size="32.5" fill="#111"><text x="1398" y="603.5">burning·star,·every·silent·nebula,·every·particle·leaves·an·invisible</text><text x="1398" y="651.0">information·processor.·The·universe·computes·its·own·destiny.</text><text x="1398" y="724.0">How·much·does·it·compute?·How·fast?·How·big·is·its·total</text><text x="1398" y="771.5">What·is·the·link·between·energy·and·information;·what·is</text><text x="1398" y="819.0">hard·questions,·but·they·are·not·as·mystical·or·metaphorical</text><text x="1398" y="866.5">information·theorists,·a·new·breed,·struggle·with·them·together</text><text x="1398" y="914.0">tentative·answers.·(“The·bit·count·of·the·cosmos,·however</text><text x="1398" y="961.5">power,”·according·to·Wheeler.·According·to·Seth·Lloyd:</text><text x="1398" y="1009.0">anew·at·the·mysteries·of·thermodynamic·entropy·and·at</text><text x="1398" y="1056.5">holes.·“Tomorrow,”·Wheeler·declares,·“we·will·have·learned</text><text x="1398" y="1104.0">the·language·of·information.”·¶</text><text x="1398" y="1177.0">·As·the·role·of·information·grows·beyond·anyone’s·reckoning</text><text x="1398" y="1224.0">now·say.·We·have·information·fatigue,·anxiety,·and·glut.·We</text><text x="1398" y="1271.0">and·his·impish·underlings,·the·computer·virus,·the·busy·signal</text><text x="1398" y="1318.5">presentation.·All·this,·too,·is·due·in·its·roundabout·way·to</text><text x="1398" y="1365.5">Robinson·Pierce·(the·Bell·Labs·engineer·who·had·come·up</text><text x="1398" y="1412.5">is·hard·to·picture·the·world·before·Shannon·as·it·seemed·to·those</text><text x="2919" y="1412.5" text-anchor="end">who·lived·in·it.·It·is·difficult·to·recover·</text><text x="1398" y="1460.0">innocence,·ignorance,·and·lack·of·understanding.”·¶</text><text x="1398" y="1533.0">·Yet·the·past·does·come·back·into·focus.·In·the·<tspan font-style="italic">beginning·was·the</tspan></text><text x="2890" y="1533.0" text-anchor="end">word,·according·to·John.·We·are·the·</text><text x="1398" y="1580.5">species·that·named·itself·<tspan font-style="italic">Homo·sapiens</tspan>,·the·one·who·knows</text><text x="2906" y="1580.5" text-anchor="end">—and·then,·after·reflection,·amended·that·</text><text x="1398" y="1628.1">to·<tspan font-style="italic">Homo·sapiens·sapiens</tspan>.·The·greatest·gift·of·Prometheus</text><text x="2906" y="1628.1" text-anchor="end">·not·fire·after·all:·“Numbers,·</text><text x="1398" y="1675.7">too,·chiefest·of·sciences,·I·invented·for·them,·and·the·combining</text><text x="2822" y="1675.7" text-anchor="end">letters,·creative·mother·of·the·</text><text x="1398" y="1723.2">Muses’·arts,·with·which·to·hold·all·things·in·memory.”·The</text><text x="2822" y="1723.2" text-anchor="end">was·a·founding·technology·of·</text><text x="1398" y="1770.8">information.·The·telephone,·the·fax·machine,·the·calculator,</text><text x="2903" y="1770.8" text-anchor="end">ultimately,·the·computer·are·only·the·</text><text x="1398" y="1818.3">latest·innovations·devised·for·saving,·manipulating,·and·commu</text><text x="2857" y="1818.3" text-anchor="end">knowledge.·Our·culture·has·</text><text x="1398" y="1865.8">absorbed·a·working·vocabulary·for·these·useful·inventions.·We</text><text x="2890" y="1865.8" text-anchor="end">of·compressing·data,·aware·that·</text><text x="1398" y="1913.4">this·is·quite·different·from·compressing·a·gas.·We·know·about</text><text x="2910" y="1913.4" text-anchor="end">information,·parsing·it,·sorting·</text><text x="1398" y="1961.0">it,·matching·it,·and·filtering·it.·Our·furniture·includes·iPods</text><text x="2921" y="1961.0" text-anchor="end">displays,·our·skills·include·texting·</text><text x="1398" y="2008.5">and·Googling,·we·are·endowed,·we·are·expert,·so·we·see·infor</text><text x="2835" y="2008.5" text-anchor="end">the·foreground.·But·it·has·</text><text x="1398" y="2056.1">always·been·there.·It·pervaded·our·ancestors’·world,·too,·taking</text><text x="2874" y="2056.1" text-anchor="end">from·solid·to·ethereal,·granite·</text><text x="1398" y="2103.6">gravestones·and·the·whispers·of·courtiers.·The·punched·card</text><text x="2904" y="2103.6" text-anchor="end">register,·the·nineteenth-century·</text><text x="1398" y="2151.2">Difference·Engine,·the·wires·of·telegraphy·all·played·their</text><text x="2922" y="2151.2" text-anchor="end">in·weaving·the·spiderweb·of·information·</text><text x="1398" y="2198.7">to·which·we·cling.·Each·new·information·technology,·in·its</text><text x="2835" y="2198.7" text-anchor="end">time,·set·off·blooms·in·storage·and·</text><text x="1398" y="2246.2" textLength="1393" lengthAdjust="spacingAndGlyphs">transmission.·From·the·printing·press·came·new·species·of·information·organizers:·dictionaries,·</text><text x="1398" y="2293.8" textLength="1463" lengthAdjust="spacingAndGlyphs">cyclopaedias,·almanacs—compendiums·of·words,·classifiers·of·facts,·trees·of·knowledge.·Hardly·any·</text><text x="1398" y="2341.3" textLength="1489" lengthAdjust="spacingAndGlyphs">information·technology·goes·obsolete.·Each·new·one·throws·its·predecessors·into·relief.·Thus·Thomas·</text><text x="1398" y="2388.9" textLength="1437" lengthAdjust="spacingAndGlyphs">Hobbes,·in·the·seventeenth·century,·resisted·his·era’s·new-media·hype:·“The·invention·of·printing,·</text><text x="1398" y="2436.4" textLength="1527" lengthAdjust="spacingAndGlyphs">though·ingenious,·compared·with·the·invention·of·letters·is·no·great·matter.”·Up·to·a·point,·he·was·right.·</text><text x="1398" y="2484.0" textLength="1444" lengthAdjust="spacingAndGlyphs">Every·new·medium·transforms·the·nature·of·human·thought.·In·the·long·run,·history·is·the·story·of·</text><text x="1398" y="2531.6">information·becoming·aware·of·itself.¶</text><path d="M1672.5 728.0h124.6M1672.5 732.0h124.6" stroke="#3b6fd8" stroke-width="1.6" fill="none"/><path d="M1878.4 1322.5h25.3M1878.4 1326.5h25.3" stroke="#3b6fd8" stroke-width="1.6" fill="none"/><path d="M1957.9 1322.5h164.4M1957.9 1326.5h164.4" stroke="#3b6fd8" stroke-width="1.6" fill="none"/><path d="M1973.5 1917.4h81.3M1973.5 1921.4h81.3" stroke="#3b6fd8" stroke-width="1.6" fill="none"/></g></svg></div>
<svg style="left:0;top:0" width="4384" height="2600"><path d="M1656.3 1637.1L1660.3 1635.1L1664.3 1639.1L1668.3 1635.1L1672.3 1639.1L1676.3 1635.1L1680.3 1639.1L1684.3 1635.1L1688.3 1639.1L1692.3 1635.1L1696.3 1639.1L1700.3 1635.1L1704.3 1639.1L1708.3 1635.1L1712.3 1639.1L1716.3 1635.1L1720.3 1639.1L1724.3 1635.1L1728.3 1639.1L1732.3 1635.1L1736.3 1639.1L1740.3 1635.1L1744.3 1639.1L1748.3 1635.1L1752.3 1639.1L1756.3 1635.1L1760.3 1639.1L1764.3 1635.1L1768.3 1639.1L1772.3 1635.1" fill="none" stroke="#e00" stroke-width="1.4"/></svg>
<svg style="left:0;top:0" width="4384" height="2600"><path d="M1463.0 1684.7L1467.0 1682.7L1471.0 1686.7L1475.0 1682.7L1479.0 1686.7L1483.0 1682.7L1487.0 1686.7L1491.0 1682.7L1495.0 1686.7L1499.0 1682.7L1503.0 1686.7L1507.0 1682.7L1511.0 1686.7L1515.0 1682.7L1519.0 1686.7L1523.0 1682.7L1527.0 1686.7L1531.0 1682.7L1535.0 1686.7L1539.0 1682.7L1543.0 1686.7L1547.0 1682.7L1551.0 1686.7L1555.0 1682.7L1559.0 1686.7L1563.0 1682.7L1567.0 1686.7L1571.0 1682.7L1575.0 1686.7" fill="none" stroke="#e00" stroke-width="1.4"/></svg>
<svg style="left:0;top:0" width="4384" height="2600"><path d="M1398.0 2302.8L1402.0 2300.8L1406.0 2304.8L1410.0 2300.8L1414.0 2304.8L1418.0 2300.8L1422.0 2304.8L1426.0 2300.8L1430.0 2304.8L1434.0 2300.8L1438.0 2304.8L1442.0 2300.8L1446.0 2304.8L1450.0 2300.8L1454.0 2304.8L1458.0 2300.8L1462.0 2304.8L1466.0 2300.8L1470.0 2304.8L1474.0 2300.8L1478.0 2304.8L1482.0 2300.8L1486.0 2304.8L1490.0 2300.8L1494.0 2304.8L1498.0 2300.8L1502.0 2304.8L1506.0 2300.8L1510.0 2304.8L1514.0 2300.8L1518.0 2304.8L1522.0 2300.8L1526.0 2304.8L1530.0 2300.8L1534.0 2304.8L1538.0 2300.8L1542.0 2304.8L1546.0 2300.8L1550.0 2304.8L1554.0 2300.8L1558.0 2304.8L1562.0 2300.8L1566.0 2304.8L1570.0 2300.8L1574.0 2304.8L1578.0 2300.8L1582.0 2304.8L1586.0 2300.8" fill="none" stroke="#e00" stroke-width="1.4"/></svg>
<div class="a" style="left:2104px;top:145px;width:1485px;height:1229px;border-radius:15px;background:#f0f0f0;border:1.5px solid #9a9a9a;box-shadow:0 26px 130px rgba(0,0,0,0.5), 0 0 14px rgba(0,0,0,0.18);overflow:hidden"><div class="a" style="left:0;top:0;width:100%;height:72px;background:#f9f1f0"></div></div>
<div class="t" style="left:2124.0px;top:167.4px;font-size:27.9px;color:#1a1a1a;">Find and Replace</div>
<div class="t" style="left:3408.0px;top:169.1px;font-size:27px;color:#333;">?</div>
<svg style="left:3517px;top:166px" width="28" height="28" viewBox="0 0 28 28" fill="none" stroke="#222" stroke-width="2.6"><path d="M2 2l24 24M26 2L2 26"/></svg>
<div class="a" style="left:2124px;top:240px;width:143px;height:52px;background:#f0f0f0;border:1px solid #d9d9d9;border-bottom:none"></div>
<div class="a" style="left:2418px;top:240px;width:140px;height:52px;background:#f0f0f0;border:1px solid #d9d9d9;border-bottom:none"></div>
<div class="a" style="left:2123px;top:290px;width:1444px;height:1064px;background:#f9f9f9;border:1px solid #d9d9d9"></div>
<div class="a" style="left:2267px;top:236px;width:151px;height:56px;background:#f9f9f9;border:1px solid #d9d9d9;border-bottom:none"></div>
<div class="t" style="left:2173.0px;top:253.8px;font-size:25px;color:#1a1a1a;">Find</div>
<div class="a" style="left:2207.7px;top:278.0px;width:13.9px;height:2px;background:#1a1a1a"></div>
<div class="t" style="left:2299.0px;top:251.8px;font-size:25px;color:#1a1a1a;">Replace</div>
<div class="a" style="left:2331.0px;top:276.0px;width:13.9px;height:2px;background:#1a1a1a"></div>
<div class="t" style="left:2454.0px;top:253.8px;font-size:25px;color:#1a1a1a;">Go To</div>
<div class="a" style="left:2454.0px;top:278.0px;width:19.4px;height:2px;background:#1a1a1a"></div>
<div class="t" style="left:2147.0px;top:330.0px;font-size:24.8px;color:#1a1a1a;">Find what:</div>
<div class="a" style="left:2167.7px;top:354.0px;width:13.8px;height:2px;background:#1a1a1a"></div>
<div class="a" style="left:2320px;top:316px;width:1227px;height:51px;background:#fff;border:1.5px solid #a9a9a9"></div>
<div class="a" style="left:3501px;top:320px;width:43px;height:44px;border:1px solid #cfcfcf;background:#fff"></div>
<svg style="left:3510.0px;top:334.5px" width="24" height="15.0" viewBox="-3 -3 24 15.0" fill="none" stroke="#555" stroke-width="1.8"><path d="M1 1l8.0 8.0 8.0 -8.0"/></svg>
<div class="t" style="left:2327.0px;top:331.4px;font-size:25.5px;color:#111;">^p</div>
<div class="t" style="left:2147.0px;top:489.0px;font-size:24.8px;color:#1a1a1a;">Replace with:</div>
<div class="a" style="left:2262.8px;top:513.0px;width:5.5px;height:2px;background:#1a1a1a"></div>
<div class="a" style="left:2320px;top:474px;width:1227px;height:52px;background:#fff;border:1.5px solid #a9a9a9"></div>
<div class="a" style="left:3501px;top:479px;width:43px;height:44px;border:1px solid #cfcfcf;background:#fff"></div>
<svg style="left:3510.0px;top:493.5px" width="24" height="15.0" viewBox="-3 -3 24 15.0" fill="none" stroke="#555" stroke-width="1.8"><path d="M1 1l8.0 8.0 8.0 -8.0"/></svg>
<div class="t" style="left:2327.0px;top:489.4px;font-size:25.5px;color:#111;">^p</div>
<div class="a" style="left:2147px;top:633px;width:201px;height:58px;background:#fff;border:1.5px solid #cfcfcf;border-radius:6px;"></div>
<div class="t" style="left:2204.0px;top:651.1px;font-size:24.7px;color:#1a1a1a;">&lt;&lt; Less</div>
<div class="a" style="left:2239.7px;top:675.0px;width:13.7px;height:2px;background:#1a1a1a"></div>
<div class="a" style="left:2656px;top:633px;width:202px;height:58px;background:#fff;border:1.5px solid #cfcfcf;border-radius:6px;"></div>
<div class="t" style="left:2712.0px;top:651.1px;font-size:24.7px;color:#1a1a1a;">Replace</div>
<div class="a" style="left:2712.0px;top:675.0px;width:17.8px;height:2px;background:#1a1a1a"></div>
<div class="a" style="left:2884px;top:633px;width:202px;height:58px;background:#fff;border:1.5px solid #cfcfcf;border-radius:6px;"></div>
<div class="t" style="left:2928.0px;top:651.1px;font-size:24.7px;color:#1a1a1a;">Replace All</div>
<div class="a" style="left:3025.5px;top:675.0px;width:16.5px;height:2px;background:#1a1a1a"></div>
<div class="a" style="left:3113px;top:633px;width:202px;height:58px;background:#fff;border:1.5px solid #cfcfcf;border-radius:6px;"></div>
<div class="t" style="left:3161.0px;top:651.1px;font-size:24.7px;color:#1a1a1a;">Find Next</div>
<div class="a" style="left:3161.0px;top:675.0px;width:15.1px;height:2px;background:#1a1a1a"></div>
<div class="a" style="left:3342px;top:633px;width:202px;height:58px;background:#fff;border:1.5px solid #cfcfcf;border-radius:6px;"></div>
<div class="t" style="left:3406.0px;top:651.1px;font-size:24.7px;color:#1a1a1a;">Cancel</div>
<div class="t" style="left:2147.0px;top:707.0px;font-size:24.8px;color:#1a1a1a;">Search Options</div>
<div class="a" style="left:2328px;top:717px;width:1218px;height:2px;background:#dedede"></div>
<div class="t" style="left:2171.0px;top:770.0px;font-size:24.8px;color:#1a1a1a;">Search:</div>
<div class="a" style="left:2249.6px;top:794.0px;width:6.9px;height:2px;background:#1a1a1a"></div>
<div class="a" style="left:2277px;top:754px;width:181px;height:55px;background:#fff;border:1.5px solid #a9a9a9"></div>
<div class="a" style="left:2413px;top:757px;width:43px;height:49px;border:1px solid #cfcfcf;background:#fff"></div>
<svg style="left:2421.0px;top:774.5px" width="24" height="15.0" viewBox="-3 -3 24 15.0" fill="none" stroke="#555" stroke-width="1.8"><path d="M1 1l8.0 8.0 8.0 -8.0"/></svg>
<div class="t" style="left:2285.0px;top:770.8px;font-size:25px;color:#1a1a1a;">All</div>
<div class="a" style="left:2170px;top:821px;width:33px;height:32px;border:1.8px solid #555;border-radius:5px;background:#f3f3f3"></div>
<div class="t" style="left:2214.0px;top:827.0px;font-size:24.8px;color:#1a1a1a;">Match case</div>
<div class="a" style="left:2267.7px;top:851.0px;width:13.8px;height:2px;background:#1a1a1a"></div>
<div class="a" style="left:2170px;top:871.5px;width:33px;height:32px;border:1.8px solid #d0d0d0;border-radius:5px;background:#f9f9f9"></div>
<div class="t" style="left:2214.0px;top:877.5px;font-size:24.8px;color:#8a8a8a;">Find whole words only</div>
<div class="a" style="left:2170px;top:922px;width:33px;height:32px;border:1.8px solid #555;border-radius:5px;background:#f3f3f3"></div>
<div class="t" style="left:2214.0px;top:928.0px;font-size:24.8px;color:#1a1a1a;">Use wildcards</div>
<div class="a" style="left:2214.0px;top:952.0px;width:17.9px;height:2px;background:#1a1a1a"></div>
<div class="a" style="left:2170px;top:972.5px;width:33px;height:32px;border:1.8px solid #555;border-radius:5px;background:#f3f3f3"></div>
<div class="t" style="left:2214.0px;top:978.5px;font-size:24.8px;color:#1a1a1a;">Sounds like (English)</div>
<div class="a" style="left:2316.0px;top:1002.5px;width:12.4px;height:2px;background:#1a1a1a"></div>
<div class="a" style="left:2170px;top:1023px;width:33px;height:32px;border:1.8px solid #555;border-radius:5px;background:#f3f3f3"></div>
<div class="t" style="left:2214.0px;top:1029.0px;font-size:24.8px;color:#1a1a1a;">Find all word forms (English)</div>
<div class="a" style="left:2300.8px;top:1053.0px;width:17.9px;height:2px;background:#1a1a1a"></div>
<div class="a" style="left:2958px;top:821px;width:33px;height:32px;border:1.8px solid #555;border-radius:5px;background:#f3f3f3"></div>
<div class="t" style="left:3000.0px;top:827.0px;font-size:24.8px;color:#1a1a1a;">Match prefix</div>
<div class="a" style="left:3122.7px;top:851.0px;width:12.4px;height:2px;background:#1a1a1a"></div>
<div class="a" style="left:2958px;top:871.5px;width:33px;height:32px;border:1.8px solid #555;border-radius:5px;background:#f3f3f3"></div>
<div class="t" style="left:3000.0px;top:877.5px;font-size:24.8px;color:#1a1a1a;">Match suffix</div>
<div class="a" style="left:3041.3px;top:901.5px;width:12.4px;height:2px;background:#1a1a1a"></div>
<div class="a" style="left:2958px;top:972.5px;width:33px;height:32px;border:1.8px solid #555;border-radius:5px;background:#f3f3f3"></div>
<div class="t" style="left:3000.0px;top:978.5px;font-size:24.8px;color:#1a1a1a;">Ignore punctuation characters</div>
<div class="a" style="left:3315.7px;top:1002.5px;width:12.4px;height:2px;background:#1a1a1a"></div>
<div class="a" style="left:2958px;top:1023px;width:33px;height:32px;border:1.8px solid #555;border-radius:5px;background:#f3f3f3"></div>
<div class="t" style="left:3000.0px;top:1029.0px;font-size:24.8px;color:#1a1a1a;">Ignore white-space characters</div>
<div class="a" style="left:3077.2px;top:1053.0px;width:17.9px;height:2px;background:#1a1a1a"></div>
<div class="t" style="left:2147.0px;top:1209.0px;font-size:24.8px;color:#1a1a1a;">Replace</div>
<div class="a" style="left:2243px;top:1220px;width:1303px;height:2px;background:#dedede"></div>
<div class="a" style="left:2173px;top:1257px;width:189px;height:58px;background:#fff;border:1.5px solid #cfcfcf;border-radius:6px;"></div>
<div class="t" style="left:2220.0px;top:1274.1px;font-size:24.7px;color:#1a1a1a;">Format</div>
<div class="a" style="left:2235.1px;top:1298.0px;width:13.7px;height:2px;background:#1a1a1a"></div>
<svg style="left:2308px;top:1281px" width="14" height="10" viewBox="0 0 14 10"><path d="M1 1h12L7 9z" fill="#222"/></svg>
<div class="a" style="left:2400px;top:1257px;width:204px;height:58px;background:#cce4f7;border:1.5px solid #3c7fb1;border-radius:6px;outline:1.5px dotted #222;outline-offset:0px"></div>
<div class="t" style="left:2449.0px;top:1274.1px;font-size:24.7px;color:#1a1a1a;">Special</div>
<div class="a" style="left:2479.2px;top:1298.0px;width:13.7px;height:2px;background:#1a1a1a"></div>
<svg style="left:2537px;top:1281px" width="14" height="10" viewBox="0 0 14 10"><path d="M1 1h12L7 9z" fill="#222"/></svg>
<div class="a" style="left:2628px;top:1257px;width:215px;height:56px;background:#fff;border:1.5px solid #d6d6d6;border-radius:6px;"></div>
<div class="t" style="left:2654.0px;top:1272.1px;font-size:24.7px;color:#8a8a8a;">No Formatting</div>
<div class="a" style="left:2144px;top:1315px;width:459px;height:887px;background:#fff;border:1.5px solid #cfcfcf;box-shadow:2px 3px 6px rgba(0,0,0,0.15)"></div>
<div class="a" style="left:2146px;top:1318px;width:455px;height:56px;background:#d5dff0;border:1px solid #a9bbdc"></div>
<div class="t" style="left:2227.0px;top:1335.0px;font-size:28.3px;color:#555a66;">Paragraph Mark</div>
<div class="a" style="left:2227.0px;top:1362.0px;width:18.9px;height:2px;background:#555a66"></div>
<div class="t" style="left:2227.0px;top:1393.9px;font-size:28.3px;color:#6a6f78;">Tab Character</div>
<div class="a" style="left:2227.0px;top:1420.9px;width:17.3px;height:2px;background:#6a6f78"></div>
<div class="t" style="left:2227.0px;top:1452.8px;font-size:28.3px;color:#6a6f78;">Caret Character</div>
<div class="a" style="left:2263.2px;top:1479.8px;width:9.4px;height:2px;background:#6a6f78"></div>
<div class="t" style="left:2227.0px;top:1511.7px;font-size:28.3px;color:#6a6f78;">§ Section Character</div>
<div class="a" style="left:2389.0px;top:1538.7px;width:15.7px;height:2px;background:#6a6f78"></div>
<div class="t" style="left:2227.0px;top:1570.6px;font-size:28.3px;color:#6a6f78;">¶ Paragraph Character</div>
<div class="a" style="left:2268.9px;top:1597.6px;width:15.7px;height:2px;background:#6a6f78"></div>
<div class="t" style="left:2227.0px;top:1629.5px;font-size:28.3px;color:#6a6f78;">Clipboard Contents</div>
<div class="a" style="left:2227.0px;top:1656.5px;width:20.4px;height:2px;background:#6a6f78"></div>
<div class="t" style="left:2227.0px;top:1688.4px;font-size:28.3px;color:#6a6f78;">Column Break</div>
<div class="a" style="left:2269.5px;top:1715.4px;width:15.7px;height:2px;background:#6a6f78"></div>
<div class="t" style="left:2227.0px;top:1747.3px;font-size:28.3px;color:#6a6f78;">Em Dash</div>
<div class="a" style="left:2245.9px;top:1774.3px;width:23.6px;height:2px;background:#6a6f78"></div>
<div class="t" style="left:2227.0px;top:1806.2px;font-size:28.3px;color:#6a6f78;">En Dash</div>
<div class="a" style="left:2245.9px;top:1833.2px;width:15.7px;height:2px;background:#6a6f78"></div>
<div class="t" style="left:2227.0px;top:1865.1px;font-size:28.3px;color:#6a6f78;">Find What Text</div>
<div class="a" style="left:2227.0px;top:1892.1px;width:17.3px;height:2px;background:#6a6f78"></div>
<div class="t" style="left:2227.0px;top:1924.0px;font-size:28.3px;color:#6a6f78;">Manual Line Break</div>
<div class="a" style="left:2327.7px;top:1951.0px;width:15.7px;height:2px;background:#6a6f78"></div>
<div class="t" style="left:2227.0px;top:1982.9px;font-size:28.3px;color:#6a6f78;">Manual Page Break</div>
<div class="a" style="left:2461.4px;top:2009.9px;width:14.2px;height:2px;background:#6a6f78"></div>
<div class="t" style="left:2227.0px;top:2041.8px;font-size:28.3px;color:#6a6f78;">Nonbreaking Hyphen</div>
<div class="a" style="left:2395.3px;top:2068.8px;width:20.4px;height:2px;background:#6a6f78"></div>
<div class="t" style="left:2227.0px;top:2100.7px;font-size:28.3px;color:#6a6f78;">Nonbreaking Space</div>
<div class="a" style="left:2395.3px;top:2127.7px;width:18.9px;height:2px;background:#6a6f78"></div>
<div class="t" style="left:2227.0px;top:2159.6px;font-size:28.3px;color:#6a6f78;">Optional Hyphen</div>
<div class="a" style="left:2227.0px;top:2186.6px;width:22.0px;height:2px;background:#6a6f78"></div>
<svg style="left:0;top:0" width="4384" height="2687" viewBox="0 0 4384 2687">
<g fill="none" stroke-linecap="butt">
<line x1="1759" y1="273" x2="2291" y2="338" stroke="#ff0000" stroke-width="14"/>
<line x1="1287" y1="380" x2="1397" y2="1080" stroke="#ff0000" stroke-width="14"/>
<path d="M1374 1073L1417 1067L1401 1106z" fill="#ff0000"/>
<line x1="2353" y1="552" x2="2369" y2="1303" stroke="#ff0000" stroke-width="14"/>
<line x1="2389" y1="456" x2="2556" y2="298" stroke="#245f9c" stroke-width="13"/>
<circle cx="2345" cy="348" r="49" stroke="#ff0000" stroke-width="14"/>
<circle cx="2350" cy="494" r="49" stroke="#245f9c" stroke-width="14"/>
<circle cx="1402" cy="1161" r="49" stroke="#ff0000" stroke-width="14"/>
<rect x="2156" y="1308" width="434" height="74" stroke="#ff0000" stroke-width="14"/>
<rect x="820.7" y="169.7" width="931.6" height="206.6" fill="#fff" stroke="#ff0000" stroke-width="13.4"/>
<rect x="2559.5" y="190.5" width="932" height="207" fill="#fff" stroke="#245f9c" stroke-width="13"/>
</g></svg>
<svg style="left:0;top:0" width="4384" height="600"><text x="1285" y="249" font-family="Liberation Sans" font-size="78" text-anchor="middle" fill="#000">This has a space after</text></svg>
<svg style="left:0;top:0" width="4384" height="600"><text x="1286" y="350" font-family="Liberation Sans" font-size="79" text-anchor="middle" fill="#000">the paragraph mark</text></svg>
<svg style="left:0;top:0" width="4384" height="600"><text x="3025" y="272" font-family="Liberation Sans" font-size="78" text-anchor="middle" fill="#000">This has no space after</text></svg>
<svg style="left:0;top:0" width="4384" height="600"><text x="3025.5" y="369" font-family="Liberation Sans" font-size="79" text-anchor="middle" fill="#000">the paragraph mark</text></svg>
</body></html>
